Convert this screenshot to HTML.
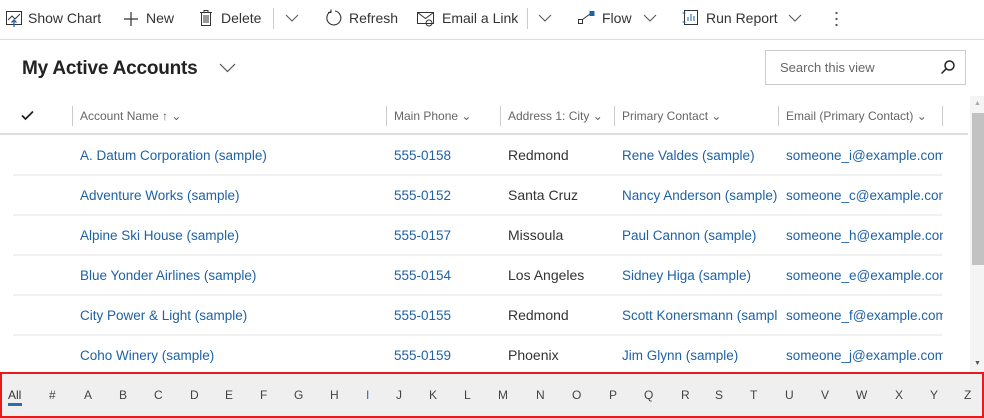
<!DOCTYPE html>
<html><head><meta charset="utf-8"><style>
*{margin:0;padding:0;box-sizing:border-box}
body{width:984px;height:418px;overflow:hidden;background:#fff;font-family:"Segoe UI","Liberation Sans",sans-serif;color:#333;position:relative}
.a{position:absolute;white-space:nowrap}
.tb{font-size:14px;color:#333;top:10px}
.hd{font-size:12px;color:#666;top:109px}
.lk{color:#1e61a5;font-size:13.5px}
.tx{color:#333;font-size:14px}
.vs{position:absolute;width:1px;background:#ccc}
.hl{position:absolute;left:13px;width:929px;height:2px;background:#f1f1f1}
.lt{position:absolute;top:388px;font-size:12px;color:#444}
</style></head><body>
<svg class="a" style="left:5px;top:10px" width="18" height="18" viewBox="0 0 18 18" fill="none" stroke="#333" stroke-width="1"><rect x="1.5" y="1.5" width="15" height="13"/><path d="M3 10l4-4 3 3 5-5" /><path d="M9 17V10M6.5 12.5L9 10l2.5 2.5" stroke="#1e61a5" stroke-width="1.3"/></svg>
<div class="a tb" style="left:28px">Show Chart</div>
<svg class="a" style="left:123px;top:11px" width="16" height="16" viewBox="0 0 16 16" stroke="#333" stroke-width="1.2"><path d="M8 1v14M1 8h14"/></svg>
<div class="a tb" style="left:146px">New</div>
<svg class="a" style="left:199px;top:9px" width="14" height="18" viewBox="0 0 14 18" fill="none" stroke="#333"><path d="M1 3.5h12M5 3.5V1.5h4v2M2.5 3.5v13h9v-13M5 6v8M7 6v8M9 6v8"/></svg>
<div class="a tb" style="left:221px">Delete</div>
<div class="vs" style="left:273px;top:8px;height:21px"></div>
<svg class="a" style="left:285px;top:14px" width="14" height="9" viewBox="0 0 14 9" fill="none" stroke="#555"><path d="M1 1l6 6 6-6"/></svg>
<svg class="a" style="left:325px;top:9px" width="18" height="18" viewBox="0 0 18 18" fill="none" stroke="#333" stroke-width="1.1"><path d="M6 2.5A7 7 0 1 0 10 2"/><path d="M6 0.5v3h-3"/></svg>
<div class="a tb" style="left:349px">Refresh</div>
<svg class="a" style="left:417px;top:11px" width="18" height="16" viewBox="0 0 18 16" fill="none" stroke="#333"><rect x="0.5" y="1.5" width="16" height="11"/><path d="M0.5 1.5l8 6 8-6"/><circle cx="12" cy="12" r="3"/></svg>
<div class="a tb" style="left:442px">Email a Link</div>
<div class="vs" style="left:527px;top:8px;height:21px"></div>
<svg class="a" style="left:538px;top:14px" width="14" height="9" viewBox="0 0 14 9" fill="none" stroke="#555"><path d="M1 1l6 6 6-6"/></svg>
<svg class="a" style="left:578px;top:11px" width="18" height="14" viewBox="0 0 18 14" fill="none" stroke="#333"><rect x="0.5" y="8.5" width="4" height="4"/><path d="M4.5 8.5L12 3"/><rect x="12" y="0.5" width="4" height="4" fill="#1e61a5" stroke="#1e61a5"/></svg>
<div class="a tb" style="left:602px">Flow</div>
<svg class="a" style="left:643px;top:14px" width="14" height="9" viewBox="0 0 14 9" fill="none" stroke="#555"><path d="M1 1l6 6 6-6"/></svg>
<svg class="a" style="left:682px;top:10px" width="16" height="16" viewBox="0 0 16 16" fill="none" stroke="#333"><rect x="2.5" y="0.5" width="13" height="14"/><path d="M0.5 3h3M0.5 12h3M6 11V7M9 11V4M12 11V6" stroke="#1e61a5"/></svg>
<div class="a tb" style="left:706px">Run Report</div>
<svg class="a" style="left:788px;top:14px" width="14" height="9" viewBox="0 0 14 9" fill="none" stroke="#555"><path d="M1 1l6 6 6-6"/></svg>
<div class="a" style="left:835px;top:10px;width:3px;height:18px;background:radial-gradient(circle,#555 1px,transparent 1.3px) 0 0/3px 6px"></div>
<div class="a" style="left:0;top:39px;width:984px;height:1px;background:#ddd"></div>
<div class="a" style="left:22px;top:58px;font-size:19px;font-weight:600;color:#222;letter-spacing:-0.2px">My Active Accounts</div>
<svg class="a" style="left:219px;top:63px" width="17" height="10" viewBox="0 0 17 10" fill="none" stroke="#555" stroke-width="1.2"><path d="M1 1l7.5 7.5L16 1"/></svg>
<div class="a" style="left:765px;top:50px;width:201px;height:35px;border:1px solid #ccc"></div>
<div class="a" style="left:780px;top:60px;font-size:13px;color:#666">Search this view</div>
<svg class="a" style="left:940px;top:59px" width="16" height="16" viewBox="0 0 16 16" fill="none" stroke="#222" stroke-width="1.5"><circle cx="9.5" cy="6.5" r="4.5"/><path d="M6.3 9.7L1.5 14.5"/></svg>
<svg class="a" style="left:21px;top:110px" width="13" height="11" viewBox="0 0 13 11" fill="none" stroke="#222" stroke-width="1.8"><path d="M1 5.5l3.5 3.5L12 1.5"/></svg>
<div class="vs" style="left:72px;top:106px;height:20px"></div>
<div class="vs" style="left:386px;top:106px;height:20px"></div>
<div class="vs" style="left:500px;top:106px;height:20px"></div>
<div class="vs" style="left:614px;top:106px;height:20px"></div>
<div class="vs" style="left:778px;top:106px;height:20px"></div>
<div class="vs" style="left:942px;top:106px;height:20px"></div>
<div class="a hd" style="left:80px">Account Name &#8593; &#8964;</div>
<div class="a hd" style="left:394px">Main Phone &#8964;</div>
<div class="a hd" style="left:508px">Address 1: City &#8964;</div>
<div class="a hd" style="left:622px">Primary Contact &#8964;</div>
<div class="a hd" style="left:786px">Email (Primary Contact) &#8964;</div>
<div class="a" style="left:0;top:133px;width:968px;height:2px;background:#ddd"></div>
<div class="a" style="left:0;top:136px;width:943px;height:236px;overflow:hidden">
<div class="a lk" style="left:80px;top:12px">A. Datum Corporation (sample)</div><div class="a lk" style="left:394px;top:12px">555-0158</div><div class="a tx" style="left:508px;top:11px">Redmond</div><div class="a lk" style="left:622px;top:12px">Rene Valdes (sample)</div><div class="a lk" style="left:786px;top:12px">someone_i@example.com</div>
<div class="hl" style="top:38px;left:13px"></div>
<div class="a lk" style="left:80px;top:52px">Adventure Works (sample)</div><div class="a lk" style="left:394px;top:52px">555-0152</div><div class="a tx" style="left:508px;top:51px">Santa Cruz</div><div class="a lk" style="left:622px;top:52px">Nancy Anderson (sample)</div><div class="a lk" style="left:786px;top:52px">someone_c@example.com</div>
<div class="hl" style="top:78px"></div>
<div class="a lk" style="left:80px;top:92px">Alpine Ski House (sample)</div><div class="a lk" style="left:394px;top:92px">555-0157</div><div class="a tx" style="left:508px;top:91px">Missoula</div><div class="a lk" style="left:622px;top:92px">Paul Cannon (sample)</div><div class="a lk" style="left:786px;top:92px">someone_h@example.com</div>
<div class="hl" style="top:118px"></div>
<div class="a lk" style="left:80px;top:132px">Blue Yonder Airlines (sample)</div><div class="a lk" style="left:394px;top:132px">555-0154</div><div class="a tx" style="left:508px;top:131px">Los Angeles</div><div class="a lk" style="left:622px;top:132px">Sidney Higa (sample)</div><div class="a lk" style="left:786px;top:132px">someone_e@example.com</div>
<div class="hl" style="top:158px"></div>
<div class="a lk" style="left:80px;top:172px">City Power &amp; Light (sample)</div><div class="a lk" style="left:394px;top:172px">555-0155</div><div class="a tx" style="left:508px;top:171px">Redmond</div><div class="a lk" style="left:622px;top:172px;width:156px;overflow:hidden">Scott Konersmann (sample)</div><div class="a lk" style="left:786px;top:172px">someone_f@example.com</div>
<div class="hl" style="top:198px"></div>
<div class="a lk" style="left:80px;top:212px">Coho Winery (sample)</div><div class="a lk" style="left:394px;top:212px">555-0159</div><div class="a tx" style="left:508px;top:211px">Phoenix</div><div class="a lk" style="left:622px;top:212px">Jim Glynn (sample)</div><div class="a lk" style="left:786px;top:212px">someone_j@example.com</div>
</div>
<div class="a" style="left:970px;top:96px;width:14px;height:276px;background:#f4f4f4"></div>
<div class="a" style="left:972px;top:113px;width:12px;height:152px;background:#c2c2c2"></div>
<div class="a" style="left:974px;top:100px;font-size:7px;color:#aaa">&#9650;</div>
<div class="a" style="left:974px;top:360px;font-size:7px;color:#555">&#9660;</div>
<div class="a" style="left:0;top:372px;width:984px;height:46px;background:#efefef;border:2px solid #e8191b"></div>
<div class="lt" style="left:8px;color:#333">All</div>
<div class="a" style="left:8px;top:403px;width:14px;height:3px;background:#2a6db0"></div>
<div class="lt" style="left:49px">#</div><div class="lt" style="left:84px">A</div><div class="lt" style="left:119px">B</div><div class="lt" style="left:154px">C</div><div class="lt" style="left:190px">D</div><div class="lt" style="left:225px">E</div><div class="lt" style="left:260px">F</div><div class="lt" style="left:294px">G</div><div class="lt" style="left:330px">H</div><div class="lt" style="left:366px;color:#2a6db0">I</div><div class="lt" style="left:396px">J</div><div class="lt" style="left:429px">K</div><div class="lt" style="left:464px">L</div><div class="lt" style="left:498px">M</div><div class="lt" style="left:536px">N</div><div class="lt" style="left:572px">O</div><div class="lt" style="left:609px">P</div><div class="lt" style="left:644px">Q</div><div class="lt" style="left:681px">R</div><div class="lt" style="left:715px">S</div><div class="lt" style="left:750px">T</div><div class="lt" style="left:785px">U</div><div class="lt" style="left:821px">V</div><div class="lt" style="left:856px">W</div><div class="lt" style="left:895px">X</div><div class="lt" style="left:930px">Y</div><div class="lt" style="left:964px">Z</div>
</body></html>
